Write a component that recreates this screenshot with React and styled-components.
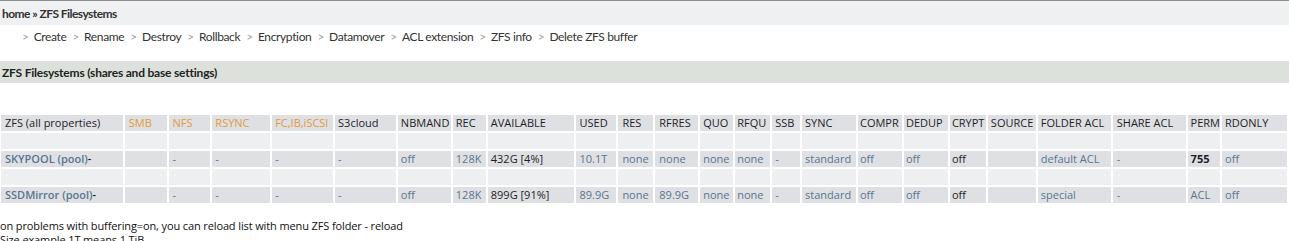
import React from "react";
import styled, { createGlobalStyle } from "styled-components";

const Global = createGlobalStyle`
  html, body { margin: 0; padding: 0; background: #fff; }
  body { font-family: "Open Sans", "Liberation Sans", sans-serif; color: #222; overflow: hidden; }
`;

const Page = styled.div`
  width: 1289px;
  height: 241px;
  overflow: hidden;
`;

const Breadcrumb = styled.div`
  height: 24px;
  border-top: 1px solid #8a8c90;
  background: #eff0f2;
  display: flex;
  align-items: center;
  padding-left: 2px;
  font-family: Lato, "Liberation Sans", sans-serif;
  font-weight: 700;
  font-size: 12px;
  letter-spacing: -0.55px;
  color: #333;
`;

const Nav = styled.nav`
  height: 23px;
  display: flex;
  align-items: center;
  padding-left: 22px;
  font-family: Lato, "Liberation Sans", sans-serif;
  font-size: 12px;
  letter-spacing: -0.35px;
  color: #333;
  gap: 5px;
`;

const Sep = styled.span`
  color: #a0a0a0;
`;

const NavLink = styled.span`
  color: #333;
  margin-right: 1px;
`;

const Band = styled.div`
  margin-top: 13px;
  height: 22px;
  background: #dce2db;
  display: flex;
  align-items: center;
  padding-left: 2px;
  font-family: Lato, "Liberation Sans", sans-serif;
  font-weight: 700;
  font-size: 12px;
  letter-spacing: -0.2px;
  color: #222;
`;

const Table = styled.table`
  margin-top: 30px;
  margin-left: -1px;
  border-spacing: 2px;
  border-collapse: separate;
  table-layout: fixed;
  font-family: "Open Sans", "Liberation Sans", sans-serif;
  font-size: 11px;
`;

const Row = styled.tr`
  height: 16px;
  background: ${(p) => (p.$empty ? "#eeeff1" : "#dfe0e4")};
`;

const Cell = styled.td`
  padding: 0 0 0 ${(p) => p.$pl ?? 3}px;
  height: 16px;
  line-height: 16px;
  white-space: nowrap;
  overflow: hidden;
  color: ${(p) =>
    p.$tone === "orange" ? "#e39a3c" : p.$tone === "link" ? "#58768e" : "#1e1e1e"};
  font-weight: ${(p) => (p.$bold ? 700 : p.$semi ? 600 : 400)};
`;

const cols = [
  ["ZFS (all properties)", 122, null, 4],
  ["SMB", 42, "orange", 4],
  ["NFS", 42, "orange", 4],
  ["RSYNC", 58, "orange", 3],
  ["FC,IB,iSCSI", 61, "orange", 3],
  ["S3cloud", 61, null, 3],
  ["NBMAND", 53, null, 3],
  ["REC", 33, null, 3],
  ["AVAILABLE", 87, null, 3],
  ["USED", 40, null, 3],
  ["RES", 35, null, 4],
  ["RFRES", 43, null, 4],
  ["QUO", 33, null, 3],
  ["RFQU", 35, null, 2],
  ["SSB", 28, null, 3],
  ["SYNC", 54, null, 3],
  ["COMPR", 44, null, 2],
  ["DEDUP", 44, null, 2],
  ["CRYPT", 36, null, 2],
  ["SOURCE", 48, null, 3],
  ["FOLDER ACL", 73, null, 3],
  ["SHARE ACL", 73, null, 4],
  ["PERM", 32, null, 3],
  ["RDONLY", 65, null, 3],
];

const L = (t) => ({ t, tone: "link" });
const B = (t) => ({ t });

const rows = [
  [
    { t: "SKYPOOL (pool)", tone: "link", semi: true, suffix: "-" },
    B(""), L("-"), L("-"), L("-"), L("-"), L("off"), L("128K"), B("432G [4%]"),
    L("10.1T"), L("none"), L("none"), L("none"), L("none"), L("-"), L("standard"),
    L("off"), L("off"), B("off"), B(""), L("default ACL"), L("-"),
    { t: "755", bold: true }, L("off"),
  ],
  [
    { t: "SSDMirror (pool)", tone: "link", semi: true, suffix: "-" },
    B(""), L("-"), L("-"), L("-"), L("-"), L("off"), L("128K"), B("899G [91%]"),
    L("89.9G"), L("none"), L("89.9G"), L("none"), L("none"), L("-"), L("standard"),
    L("off"), L("off"), B("off"), B(""), L("special"), L("-"), L("ACL"), L("off"),
  ],
];

const Suffix = styled.span`
  color: #1e1e1e;
`;

const Footer = styled.div`
  margin-top: 14px;
  font-family: "Open Sans", "Liberation Sans", sans-serif;
  font-size: 11px;
  letter-spacing: -0.12px;
  line-height: 14px;
  color: #111;
`;

const navItems = [
  "Create", "Rename", "Destroy", "Rollback", "Encryption",
  "Datamover", "ACL extension", "ZFS info", "Delete ZFS buffer",
];

export default function App() {
  return (
    <Page>
      <Global />
      <Breadcrumb>home » ZFS Filesystems</Breadcrumb>
      <Nav>
        {navItems.map((n) => (
          <React.Fragment key={n}>
            <Sep>&gt;</Sep>
            <NavLink>{n}</NavLink>
          </React.Fragment>
        ))}
      </Nav>
      <Band>ZFS Filesystems (shares and base settings)</Band>
      <Table>
        <colgroup>
          {cols.map(([n, w]) => (
            <col key={n} style={{ width: w }} />
          ))}
        </colgroup>
        <tbody>
          <Row>
            {cols.map(([n, , tone, pl]) => (
              <Cell key={n} $tone={tone} $pl={pl}>{n}</Cell>
            ))}
          </Row>
          {rows.map((r, i) => (
            <React.Fragment key={i}>
              <Row $empty>
                {cols.map(([n]) => (
                  <Cell key={n} />
                ))}
              </Row>
              <Row>
                {r.map((c, j) => (
                  <Cell key={j} $tone={c.tone} $bold={c.bold} $semi={c.semi} $pl={cols[j][3]}>
                    {c.t}
                    {c.suffix && <Suffix>{c.suffix}</Suffix>}
                  </Cell>
                ))}
              </Row>
            </React.Fragment>
          ))}
        </tbody>
      </Table>
      <Footer>
        on problems with buffering=on, you can reload list with menu ZFS folder - reload
        <br />
        Size example 1T means 1 TiB
      </Footer>
    </Page>
  );
}
